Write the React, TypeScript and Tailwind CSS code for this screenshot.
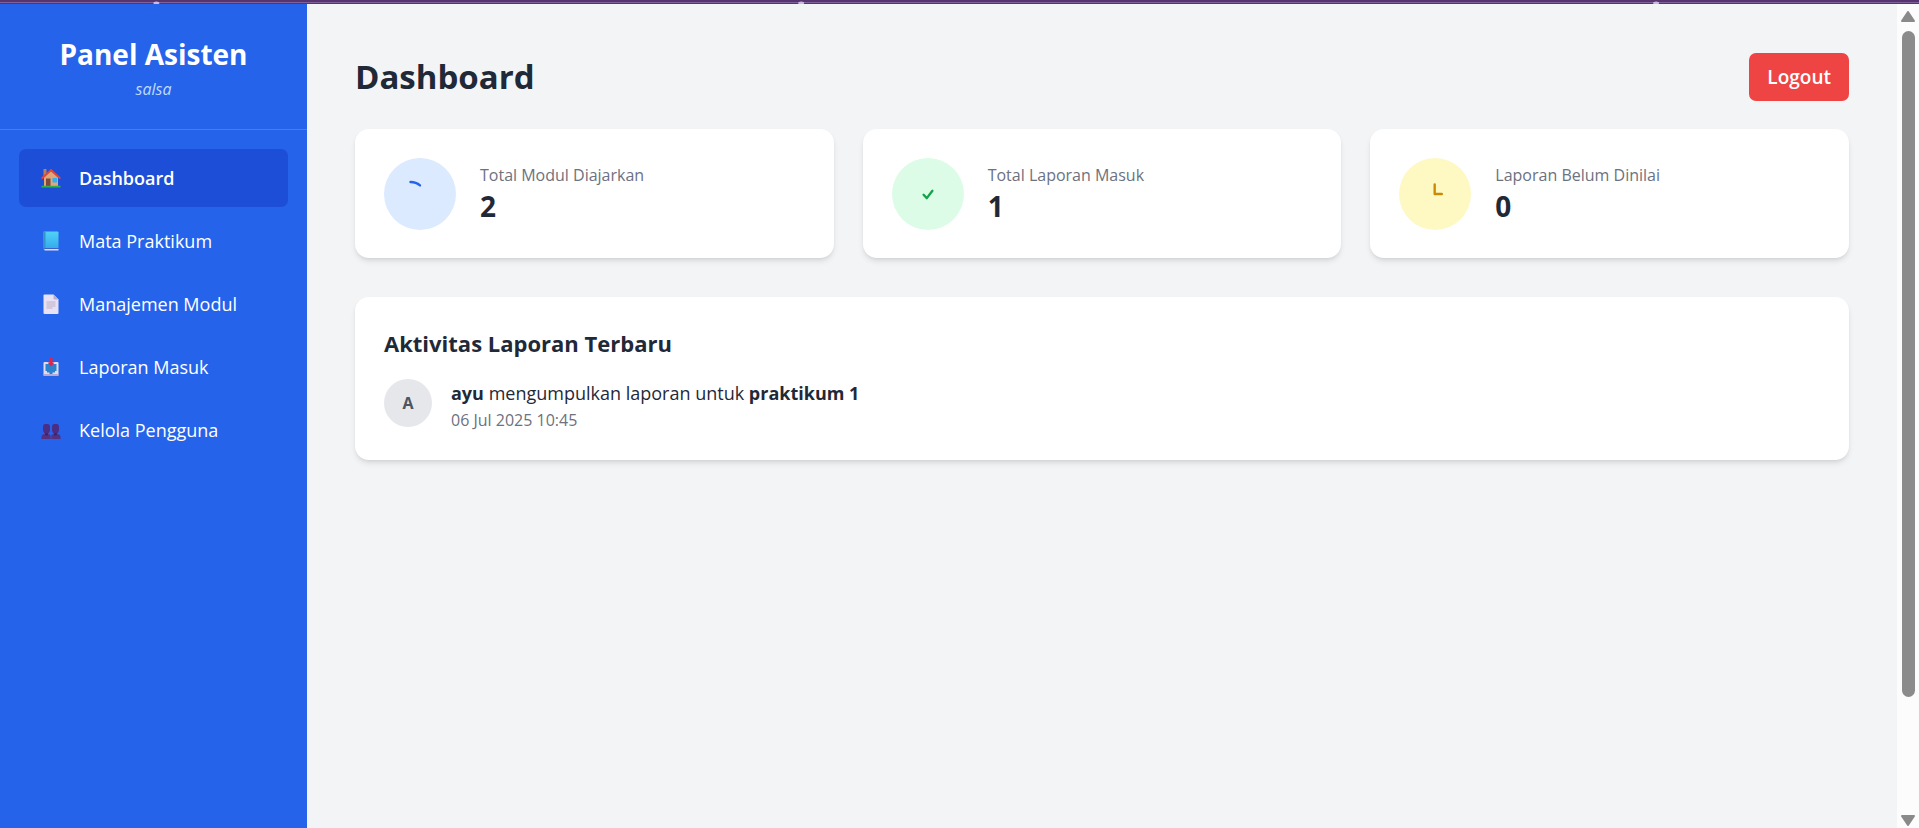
import type { ReactNode } from "react";

function HouseIcon() {
  return (
    <svg viewBox="0 0 20 20" className="size-5" aria-hidden="true">
      <rect x="2.5" y="1" width="3" height="7" fill="#b9805c" />
      <path d="M3 9.500 10 3l7 6.500V18H3z" fill="#e0a878" />
      <path d="M1.200 10 10 2l8.800 8" fill="none" stroke="#e8442f" strokeWidth="1.700" strokeLinejoin="round" strokeLinecap="round" />
      <rect x="5" y="10.500" width="4.500" height="7.500" fill="#7d4a3d" />
      <rect x="11.500" y="10" width="4.500" height="4.500" fill="#2fb0f2" />
      <rect x="0.500" y="17.700" width="19" height="1.800" rx="0.500" fill="#2fb24c" />
    </svg>
  );
}

function BookIcon() {
  return (
    <svg viewBox="0 0 20 20" className="size-5" aria-hidden="true">
      <defs>
        <linearGradient id="cover" x1="0" y1="0" x2="0" y2="1">
          <stop offset="0" stopColor="#50d3f5" />
          <stop offset="1" stopColor="#35a9ee" />
        </linearGradient>
      </defs>
      <rect x="2.500" y="0.500" width="15" height="17" rx="1" fill="url(#cover)" />
      <rect x="2.500" y="0.500" width="2" height="18.500" rx="1" fill="#3492cf" />
      <rect x="3.500" y="17" width="14" height="1" fill="#3b62c4" />
      <rect x="3.500" y="18" width="14" height="1.500" fill="#dfd8f2" />
    </svg>
  );
}

function PageIcon() {
  return (
    <svg viewBox="0 0 20 20" className="size-5" aria-hidden="true">
      <path d="M3.500 0.500H12.500L17.500 5.500V19a1 1 0 0 1-1 1H3.500a1 1 0 0 1-1-1V1.500a1 1 0 0 1 1-1z" fill="#e8e0f4" />
      <path d="M12.500 0.500V4.500a1 1 0 0 0 1 1H17.500z" fill="#b8aecb" />
      <path d="M5.500 8h9M5.500 10h9M5.500 12h9M5.500 14h6" stroke="#b9b0c6" strokeWidth="1.100" />
    </svg>
  );
}

function InboxIcon() {
  return (
    <svg viewBox="0 0 20 20" className="size-5" aria-hidden="true">
      <rect x="2.500" y="5" width="15" height="14" rx="1" fill="#e0dced" />
      <path d="M4.500 7h11v7h-1.500v1.500h-2.500V17h-3v-1.500H6V14H4.500z" fill="#2b83cf" />
      <rect x="2.500" y="17" width="15" height="2" rx="1" fill="#b9a8d2" />
      <path d="M8.500 0h3v5.500h2L10 9.500 6.500 5.500h2z" fill="#e3214f" />
    </svg>
  );
}

function UsersIcon() {
  return (
    <svg viewBox="0 0 20 20" className="size-5" aria-hidden="true">
      <g fill="#4c2d84">
        <path d="M2 6.500C2 4.500 3.500 4 5.500 4S9 4.500 9 6.500v3C9 12 7.500 14 5.500 14S2 12 2 9.500z" />
        <path d="M11 6.500C11 4.500 12.500 4 14.500 4S18 4.500 18 6.500v3c0 2.500-1.500 4.500-3.500 4.500S11 12 11 9.500z" />
      </g>
      <path d="M0.500 19v-2c0-2 1.500-3 3.500-3h3c1.500 0 2.700 1 2.700 2.500V19z" fill="#55317f" />
      <path d="M10.300 19v-2.500c0-1.500 1.200-2.500 2.700-2.500h3c2 0 3.500 1 3.500 3v2z" fill="#55317f" />
      <path d="M4.200 13h2.600v2.500H4.200zM13.200 13h2.600v2.500h-2.600z" fill="#3c2270" />
    </svg>
  );
}

const navItems: { label: string; icon: ReactNode; active?: boolean }[] = [
  { label: "Dashboard", icon: <HouseIcon />, active: true },
  { label: "Mata Praktikum", icon: <BookIcon /> },
  { label: "Manajemen Modul", icon: <PageIcon /> },
  { label: "Laporan Masuk", icon: <InboxIcon /> },
  { label: "Kelola Pengguna", icon: <UsersIcon /> },
];

function Sidebar() {
  return (
    <aside className="flex w-[307px] shrink-0 flex-col bg-[#2563eb] text-white">
      <div className="border-b border-[#3b82f6] px-7 pt-[31px] pb-7 text-center">
        <h2 className="text-[28px] leading-[38px] font-bold">Panel Asisten</h2>
        <p className="mt-1 text-[16px] leading-6 text-[#bfdbfe] italic">salsa</p>
      </div>
      <nav className="flex flex-col gap-[5px] p-[19px]">
        {navItems.map((item) => (
          <a
            key={item.label}
            href="#"
            className={
              item.active
                ? "flex h-[58px] items-center gap-[18px] rounded-[7px] bg-[#1d4ed8] px-[22px] text-[18px] font-semibold"
                : "flex h-[58px] items-center gap-[18px] rounded-[7px] px-[22px] text-[18px]"
            }
          >
            {item.icon}
            <span>{item.label}</span>
          </a>
        ))}
      </nav>
    </aside>
  );
}

function StatCard({ label, value, tone, children }: { label: string; value: number; tone: string; children: ReactNode }) {
  return (
    <div className="flex items-center gap-6 rounded-[14px] bg-white px-[29px] pt-[29px] pb-7 shadow-md">
      <div className={`flex size-[72px] shrink-0 items-center justify-center rounded-full ${tone}`}>
        <svg viewBox="0 0 24 24" className="size-[38px]" fill="none" stroke="currentColor" strokeWidth="1.500" strokeLinecap="round" strokeLinejoin="round" aria-hidden="true">
          {children}
        </svg>
      </div>
      <div>
        <p className="text-[16px] leading-6 text-[#6b7280]">{label}</p>
        <p className="text-[28px] leading-[38px] font-bold">{value}</p>
      </div>
    </div>
  );
}

function TopStrip() {
  return (
    <svg className="block h-1 w-full" aria-hidden="true">
      <rect width="100%" height="4" fill="#55346f" />
      <rect y="2" width="100%" height="1" fill="#80619a" />
      <g fill="#cdbbdc">
        <ellipse cx="8.150%" cy="3" rx="3" ry="1.500" />
        <ellipse cx="41.750%" cy="3" rx="3" ry="1.500" />
        <ellipse cx="86.300%" cy="3" rx="3" ry="1.500" />
      </g>
    </svg>
  );
}

function Scrollbar() {
  return (
    <div className="flex w-[22px] shrink-0 flex-col items-center bg-[#fcfcfc] pt-[7px] pb-0.5" aria-hidden="true">
      <svg viewBox="0 0 14 11" className="h-[11px] w-[14px]">
        <path d="M7 1 13 10H1z" fill="#8a8a8a" stroke="#8a8a8a" strokeWidth="2" strokeLinejoin="round" />
      </svg>
      <div className="flex w-full grow flex-col items-center pt-[9px]">
        <div className="h-[85%] w-[13px] rounded-full bg-[#8b8b8b]" />
      </div>
      <svg viewBox="0 0 14 11" className="h-[11px] w-[14px]">
        <path d="M1 1h12L7 10z" fill="#8a8a8a" stroke="#8a8a8a" strokeWidth="2" strokeLinejoin="round" />
      </svg>
    </div>
  );
}

export default function App() {
  return (
    <div className="flex min-h-screen flex-col bg-[#f3f4f6] font-['Open_Sans','Noto_Sans',sans-serif] text-[#1f2937]">
      <TopStrip />
      <div className="flex grow">
        <Sidebar />
        <main className="min-w-0 grow p-12">
          <header className="mb-[29px] flex items-center justify-between">
            <h1 className="text-[33px] leading-[50px] font-bold">Dashboard</h1>
            <button type="button" className="h-12 rounded-[7px] bg-[#ef4444] px-[18px] text-[19px] font-semibold text-white">
              Logout
            </button>
          </header>
          <section className="-mt-0.5 grid grid-cols-3 gap-[29px]">
            <StatCard label="Total Modul Diajarkan" value={2} tone="bg-[#dbeafe] text-[#2563eb]">
              <path d="M12 6.600A9 9 0 0 0 6 4.400" />
            </StatCard>
            <StatCard label="Total Laporan Masuk" value={1} tone="bg-[#dcfce7] text-[#16a34a]">
              <path d="M9.200 12.500 11.250 14.600 14.800 10" />
            </StatCard>
            <StatCard label="Laporan Belum Dinilai" value={0} tone="bg-[#fef9c3] text-[#ca8a04]">
              <path d="M11.800 6v6h4.500" />
            </StatCard>
          </section>
          <section className="mt-[39px] rounded-[14px] bg-white px-[29px] pt-[29px] pb-7 shadow-md">
            <h3 className="mb-[19px] text-[22px] leading-[34px] font-bold">Aktivitas Laporan Terbaru</h3>
            <div className="flex items-start gap-[19px]">
              <div className="flex size-12 shrink-0 items-center justify-center rounded-full bg-[#e5e7eb] text-[16px] font-bold text-[#4b5563]">
                A
              </div>
              <div>
                <p className="text-[18px] leading-[29px]">
                  <strong className="font-bold">ayu</strong> mengumpulkan laporan untuk <strong className="font-bold">praktikum 1</strong>
                </p>
                <p className="text-[16px] leading-6 text-[#6b7280]">06 Jul 2025 10:45</p>
              </div>
            </div>
          </section>
        </main>
        <Scrollbar />
      </div>
    </div>
  );
}
